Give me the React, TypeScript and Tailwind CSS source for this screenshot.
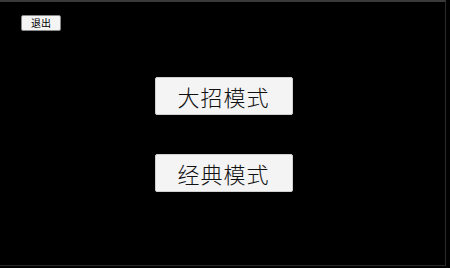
import React from 'react';

const modes = ["大招模式", "经典模式"];

const App: React.FC = () => {
  return (
    <div
      className="w-[450px] h-[268px] bg-black overflow-hidden"
      style={{ fontFamily: '"Noto Sans CJK SC", sans-serif' }}
    >
      <div className="w-[446px] h-[266px] bg-black border-t-2 border-[#3a3a3a] border-r border-r-[#2a2a2a] border-b border-b-[#2a2a2a] flex flex-col">
        {/* Exit */}
        <div className="pl-[21px] pt-[13px]">
          <button className="w-[40px] h-[16px] bg-[#f4f4f4] rounded-[2px] border border-[#888] text-[10px] leading-none text-black flex items-center justify-center">
            退出
          </button>
        </div>

        {/* Mode buttons */}
        <div className="flex flex-col items-center gap-[39px] pt-[46px] pl-[2px]">
          {modes.map((m) => (
            <button
              key={m}
              className="w-[138px] h-[38px] bg-[#f4f4f4] rounded-[2px] border border-[#d0d0d0] text-[22px] font-light leading-none text-[#111] flex items-center justify-center tracking-[1px]"
            >
              {m}
            </button>
          ))}
        </div>
      </div>
    </div>
  );
};

export default App;
